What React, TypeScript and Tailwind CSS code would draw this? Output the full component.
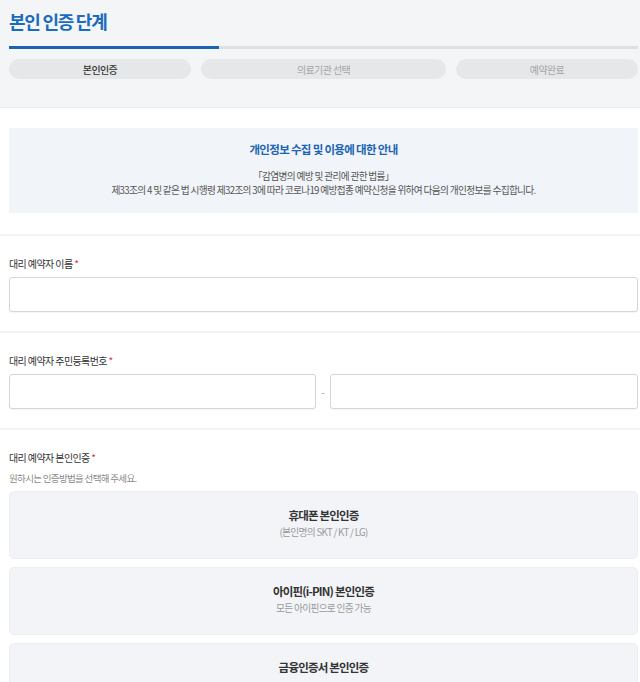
const FONT = { fontFamily: '"Noto Sans CJK KR", "Noto Sans", sans-serif' };

const STEPS = [
  { label: '본인인증', active: true },
  { label: '의료기관 선택', active: false },
  { label: '예약완료', active: false },
];

const METHODS = [
  { title: '휴대폰 본인인증', desc: '(본인명의 SKT / KT / LG)' },
  { title: '아이핀(i-PIN) 본인인증', desc: '모든 아이핀으로 인증 가능' },
  { title: '금융인증서 본인인증', desc: '' },
];

function Label({ text }: { text: string }) {
  return (
    <p className="text-[10px] leading-[12px] tracking-[-0.06em] text-[#333]">
      {text} <span className="text-[#e0343c]">*</span>
    </p>
  );
}

function Field({ className = '' }: { className?: string }) {
  return (
    <input
      type="text"
      className={`h-[35px] rounded-[3px] border border-[#d6d6d6] bg-white px-3 text-sm shadow-[0_1px_1px_rgba(0,0,0,0.04)] outline-none ${className}`}
    />
  );
}

export default function App() {
  return (
    <div className="w-full h-[682px] overflow-hidden bg-white" style={FONT}>
      {/* Step header */}
      <header className="h-[108px] bg-[#f4f5f7] border-b border-[#ececee] pl-[9px] pr-[2px] pt-[11px]">
        <h1 className="text-[18px] leading-[20px] font-bold tracking-[-0.07em] text-[#1a6cbc]">본인 인증 단계</h1>
        <div className="mt-[15px] flex h-[3px] bg-[#dfe0e2]">
          <div className="w-1/3 bg-[#1b64b0]" />
        </div>
        <div className="mt-[10px] grid grid-cols-[182px_1fr_182px] gap-[10px]">
          {STEPS.map(s => (
            <div
              key={s.label}
              className={`h-[20px] rounded-full bg-[#e6e7e8] flex items-center justify-center text-[10px] tracking-[-0.06em] ${
                s.active ? 'text-[#333] font-medium' : 'text-[#a4a5a6]'
              }`}
            >
              {s.label}
            </div>
          ))}
        </div>
      </header>

      {/* Privacy notice */}
      <section className="pl-[9px] pr-[2px] pt-[20px] pb-[21px] border-b-2 border-[#f3f3f4]">
        <div className="h-[85px] bg-[#f1f4f8] flex flex-col items-center pt-[14px] text-center">
          <h2 className="text-[11.5px] leading-[14px] font-bold tracking-[-0.06em] text-[#1d64b3]">개인정보 수집 및 이용에 대한 안내</h2>
          <p className="mt-[13px] text-[9.7px] leading-[14px] tracking-[-0.07em] text-[#555]">
            「감염병의 예방 및 관리에 관한 법률」
            <br />
            제33조의 4 및 같은 법 시행령 제32조의 3에 따라 코로나19 예방접종 예약신청을 위하여 다음의 개인정보를 수집합니다.
          </p>
        </div>
      </section>

      {/* Name */}
      <section className="pl-[9px] pr-[2px] pt-[22px] pb-[19px] border-b-2 border-[#f3f3f4]">
        <Label text="대리 예약자 이름" />
        <Field className="mt-[7px] w-full" />
      </section>

      {/* Resident number */}
      <section className="pl-[9px] pr-[2px] pt-[22px] pb-[19px] border-b-2 border-[#f3f3f4]">
        <Label text="대리 예약자 주민등록번호" />
        <div className="mt-[7px] flex items-center">
          <Field className="w-[307px]" />
          <span className="w-[14px] text-center text-[10px] text-[#999]">-</span>
          <Field className="flex-1 min-w-0" />
        </div>
      </section>

      {/* Verification method */}
      <section className="pl-[9px] pr-[2px] pt-[22px] pb-[20px]">
        <Label text="대리 예약자 본인인증" />
        <p className="mt-[8px] text-[9.5px] leading-[12px] tracking-[-0.07em] text-[#8a8a8a]">원하시는 인증방법을 선택해 주세요.</p>
        <div className="mt-[7px] flex flex-col gap-[8px]">
          {METHODS.map(m => (
            <button
              key={m.title}
              type="button"
              className="h-[68px] rounded-[5px] bg-[#f2f4f7] border border-[#eceef1] flex flex-col items-center justify-start pt-[15px]"
            >
              <span className="text-[11.5px] leading-[16px] font-bold tracking-[-0.07em] text-[#333]">{m.title}</span>
              {m.desc && (
                <span className="mt-[3px] text-[9.7px] leading-[12px] tracking-[-0.07em] text-[#999]">{m.desc}</span>
              )}
            </button>
          ))}
        </div>
      </section>
    </div>
  );
}
